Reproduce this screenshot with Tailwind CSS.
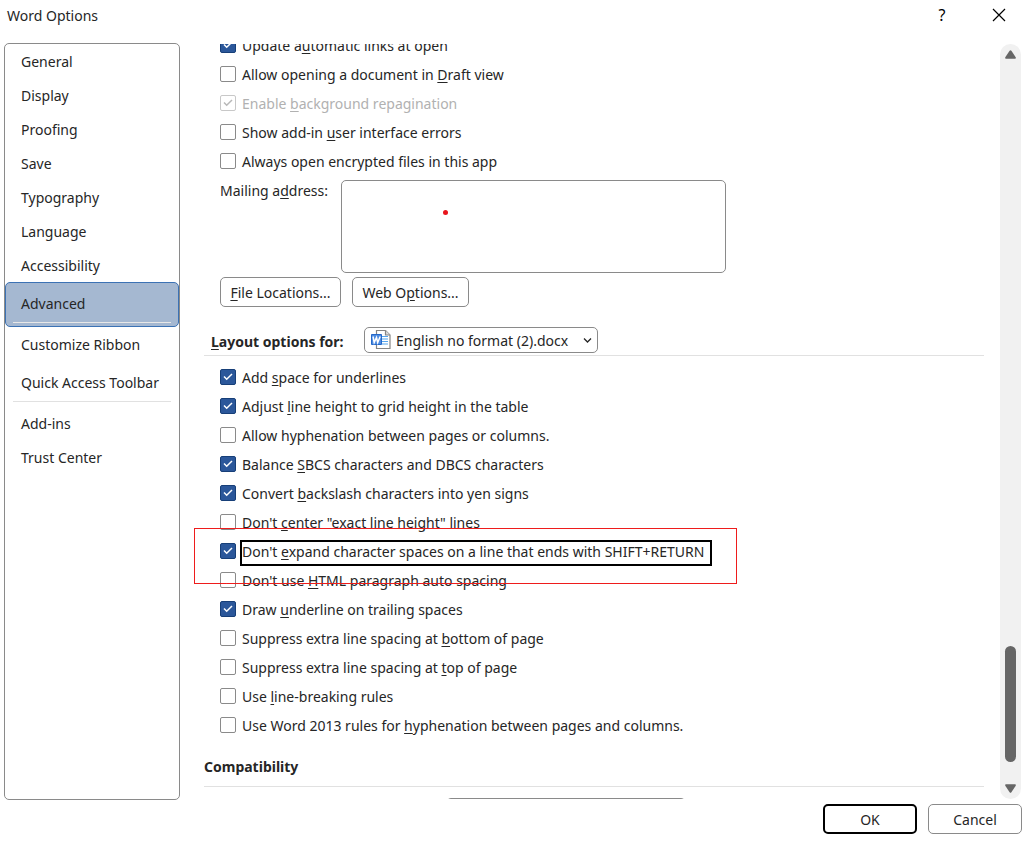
<!DOCTYPE html>
<html lang="en">
<head>
    <meta charset="UTF-8">
    <meta name="viewport" content="width=device-width, initial-scale=1.0">
    <title>Word Options</title>
    <script src="https://cdn.jsdelivr.net/npm/@tailwindcss/browser@4"></script>
</head>
<body class="flex h-screen flex-col overflow-hidden bg-white font-['Noto_Sans',sans-serif] text-[14px] leading-5 text-[#262626]">

    <!-- Title bar -->
    <header class="flex h-[43px] shrink-0 items-start justify-between pt-[6px] pr-[15px] pl-[7px]">
        <h1>Word Options</h1>
        <div class="flex items-center gap-10 text-black">
            <button type="button" aria-label="Help" class="w-4 text-center text-[16px] leading-[18px]">?</button>
            <button type="button" aria-label="Close" class="grid size-[18px] place-items-center">
                <svg class="size-[14px]" viewBox="0 0 14 14" fill="none" stroke="currentColor" stroke-width="1.2"><path d="M1 1l12 12M13 1L1 13"/></svg>
            </button>
        </div>
    </header>

    <main class="flex min-h-0 flex-1 pr-[2px] pl-1">
        <!-- Categories -->
        <nav class="flex w-44 shrink-0 flex-col rounded-[5px] border border-[#8a8a8a] pt-px">
            <a href="#" class="flex h-[34px] items-center pl-4">General</a>
            <a href="#" class="flex h-[34px] items-center pl-4">Display</a>
            <a href="#" class="flex h-[34px] items-center pl-4">Proofing</a>
            <a href="#" class="flex h-[34px] items-center pl-4">Save</a>
            <a href="#" class="flex h-[34px] items-center pl-4">Typography</a>
            <a href="#" class="flex h-[34px] items-center pl-4">Language</a>
            <a href="#" class="flex h-[34px] items-center pl-4">Accessibility</a>
            <a href="#" aria-current="page" class="-mt-px flex h-[45px] flex-col rounded-[5px] border border-[#3c72b4] bg-[#a5b8d1] px-[7px] pt-[11px]">
                <span class="pl-2">Advanced</span>
                <span class="mt-2 h-px bg-[#e8e8e8]"></span>
            </a>
            <a href="#" class="flex h-9 items-center pl-4">Customize Ribbon</a>
            <a href="#" class="flex h-[38px] items-center pt-px pl-4">Quick Access Toolbar</a>
            <hr class="mx-2 mb-[5px] border-[#e1e1e1]">
            <a href="#" class="flex h-[34px] items-center pl-4">Add-ins</a>
            <a href="#" class="flex h-[34px] items-center pl-4">Trust Center</a>
        </nav>

        <!-- Scrolled options -->
        <div class="my-px ml-[14px] min-w-0 flex-1 overflow-hidden pr-4 pl-[10px]">
            <div class="-mt-[13px] pl-4">
                <label class="flex h-[29px] items-center gap-[6px]"><input type="checkbox" checked><span>Update a<u>u</u>tomatic links at open</span></label>
                <label class="flex h-[29px] items-center gap-[6px]"><input type="checkbox"><span>Allow opening a document in <u>D</u>raft view</span></label>
                <label class="flex h-[29px] items-center gap-[6px] text-[#b1b1b1]"><input type="checkbox" checked disabled><span>Enable <u>b</u>ackground repagination</span></label>
                <label class="flex h-[29px] items-center gap-[6px]"><input type="checkbox"><span>Show add-in <u>u</u>ser interface errors</span></label>
                <label class="flex h-[29px] items-center gap-[6px]"><input type="checkbox"><span>Always open encrypted files in this app</span></label>

                <div class="flex pt-1">
                    <label for="address" class="w-[121px] pt-px">Mailing a<u>d</u>dress:</label>
                    <div class="relative">
                        <textarea id="address" class="block h-[93px] w-[385px] resize-none rounded-[5px] border border-[#8a8a8a]"></textarea>
                        <span class="absolute top-[30px] left-[102px] size-[5px] rounded-full bg-[#e8141c]"></span>
                    </div>
                </div>
                <div class="mt-1 flex gap-[11px]">
                    <button type="button" class="h-[30px] w-[121px] rounded-[5px] border border-[#8a8a8a] pt-px"><u>F</u>ile Locations...</button>
                    <button type="button" class="h-[30px] w-[117px] rounded-[5px] border border-[#8a8a8a] pt-px">Web O<u>p</u>tions...</button>
                </div>
            </div>

            <section class="mt-5">
                <div class="flex items-center border-b border-[#e1e1e1] pb-[2px] pl-[7px]">
                    <label for="doc" class="w-[153px] pt-[3px] font-bold"><u>L</u>ayout options for:</label>
                    <div class="relative">
                        <select id="doc" class="block h-[26px] w-[234px] appearance-none rounded-[5px] border border-[#8a8a8a] bg-white pt-px pl-[31px]">
                            <option>English no format (2).docx</option>
                        </select>
                        <svg class="pointer-events-none absolute top-[2px] left-[7px] h-[21px] w-5" viewBox="0 0 20 21">
                            <path d="M5.500 1.500h9l4.500 4.500v13.500H5.500z" fill="#fff" stroke="#858585" stroke-width="1.200"/>
                            <path d="M14.500 1.500V6H19" fill="#ddd" stroke="#858585" stroke-width="1.200"/>
                            <path d="M11 7.500h6M11 10h6M11 12.500h6M11 15h6" stroke="#55a5ee" stroke-width="1.200"/>
                            <path d="M.5 5.500h10v10H.5z" fill="#4d8be0" stroke="#2467c9"/>
                            <path d="M2 7.500l1.200 6 2.300-5 1.200 5L9.200 7.500" fill="none" stroke="#fff" stroke-width="1.500"/>
                        </svg>
                        <svg class="pointer-events-none absolute top-[10px] right-[6px] h-[7px] w-[9px]" viewBox="0 0 9 7" fill="none" stroke="#262626" stroke-width="1.300"><path d="M1 1.500l3.500 3.500L8 1.500"/></svg>
                    </div>
                </div>
                <div class="pt-[7px] pl-4">
                    <label class="flex h-[29px] items-center gap-[6px]"><input type="checkbox" checked><span>Add <u>s</u>pace for underlines</span></label>
                    <label class="flex h-[29px] items-center gap-[6px]"><input type="checkbox" checked><span>Adjust <u>l</u>ine height to grid height in the table</span></label>
                    <label class="flex h-[29px] items-center gap-[6px]"><input type="checkbox"><span>Allow hyphenation between pages or columns.</span></label>
                    <label class="flex h-[29px] items-center gap-[6px]"><input type="checkbox" checked><span>Balance <u>S</u>BCS characters and DBCS characters</span></label>
                    <label class="flex h-[29px] items-center gap-[6px]"><input type="checkbox" checked><span>Convert <u>b</u>ackslash characters into yen signs</span></label>
                    <label class="flex h-[29px] items-center gap-[6px]"><input type="checkbox"><span>Don't <u>c</u>enter "exact line height" lines</span></label>
                    <div class="relative">
                        <label class="flex h-[29px] items-center gap-[6px]"><input type="checkbox" checked><span class="mt-[3px] h-[22px] pr-[6px] outline-2 outline-black">Don't <u>e</u>xpand character spaces on a line that ends with SHIFT+RETURN</span></label>
                        <span class="pointer-events-none absolute -top-[9px] -left-[26px] h-14 w-[543px] border border-[#ee1c1c]"></span>
                    </div>
                    <label class="flex h-[29px] items-center gap-[6px]"><input type="checkbox"><span>Don't use <u>H</u>TML paragraph auto spacing</span></label>
                    <label class="flex h-[29px] items-center gap-[6px]"><input type="checkbox" checked><span>Draw <u>u</u>nderline on trailing spaces</span></label>
                    <label class="flex h-[29px] items-center gap-[6px]"><input type="checkbox"><span>Suppress extra line spacing at <u>b</u>ottom of page</span></label>
                    <label class="flex h-[29px] items-center gap-[6px]"><input type="checkbox"><span>Suppress extra line spacing at <u>t</u>op of page</span></label>
                    <label class="flex h-[29px] items-center gap-[6px]"><input type="checkbox"><span>Use <u>l</u>ine-breaking rules</span></label>
                    <label class="flex h-[29px] items-center gap-[6px]"><input type="checkbox"><span>Use Word 2013 rules for <u>h</u>yphenation between pages and columns.</span></label>
                </div>
            </section>

            <section class="mt-[17px]">
                <h2 class="border-b border-[#e1e1e1] pb-[9px] font-bold">Compatibility</h2>
                <select aria-label="Compatibility options for" class="mt-[11px] ml-[242px] block h-[26px] w-[240px] appearance-none rounded-[5px] border border-[#8a8a8a]"></select>
            </section>
        </div>

        <!-- Scrollbar -->
        <div class="my-px flex w-[21px] shrink-0 flex-col items-center rounded-full bg-[#f1f1f1] py-[6px]">
            <svg class="h-[9px] w-[11px]" viewBox="0 0 11 9" fill="#666"><path d="M4.600 .8q.9-1.200 1.800 0l4.300 6.500q.6 1.200-.7 1.400H1q-1.300-.2-.7-1.400z"/></svg>
            <div class="mt-auto h-[116px] w-[11px] rounded-full bg-[#666]"></div>
            <svg class="mt-[22px] h-[9px] w-[11px]" viewBox="0 0 11 9" fill="#666"><path d="M4.600 8.200q.9 1.200 1.800 0l4.300-6.500q.6-1.200-.7-1.400H1q-1.300.2-.7 1.400z"/></svg>
        </div>
    </main>

    <footer class="flex shrink-0 justify-end gap-[11px] pt-1 pr-px pb-2">
        <button type="button" class="h-[30px] w-[94px] rounded-[5px] border-2 border-black pt-px">OK</button>
        <button type="button" class="h-[30px] w-[94px] rounded-[5px] border border-[#8a8a8a] pt-px">Cancel</button>
    </footer>

    <template id="box">
        <span class="mb-[2px] grid size-4 shrink-0">
            <svg class="pointer-events-none z-10 col-start-1 row-start-1 size-4" viewBox="0 0 16 16" fill="none" stroke="currentColor" stroke-width="1.500"><path d="M4 7.500l2.700 2.700L12 5"/></svg>
        </span>
    </template>

    <script>
        // Put the tick drawing over each checkbox
        document.querySelectorAll('input[type=checkbox]').forEach(function(input) {
            var box = document.getElementById('box').content.firstElementChild.cloneNode(true);
            input.className = 'col-start-1 row-start-1 size-4 appearance-none rounded-[2px] border border-[#8a8a8a] bg-white checked:border-[#173f78] checked:bg-[#2b579a] disabled:border-[#c8c8c8] disabled:bg-white';
            input.replaceWith(box);
            box.prepend(input);
            box.querySelector('svg').classList.add(input.disabled ? 'text-[#b8b8b8]' : 'text-white');
        });
        document.querySelectorAll('u').forEach(function(u) {
            u.className = 'underline decoration-1 underline-offset-2';
        });
    </script>
</body>
</html>
